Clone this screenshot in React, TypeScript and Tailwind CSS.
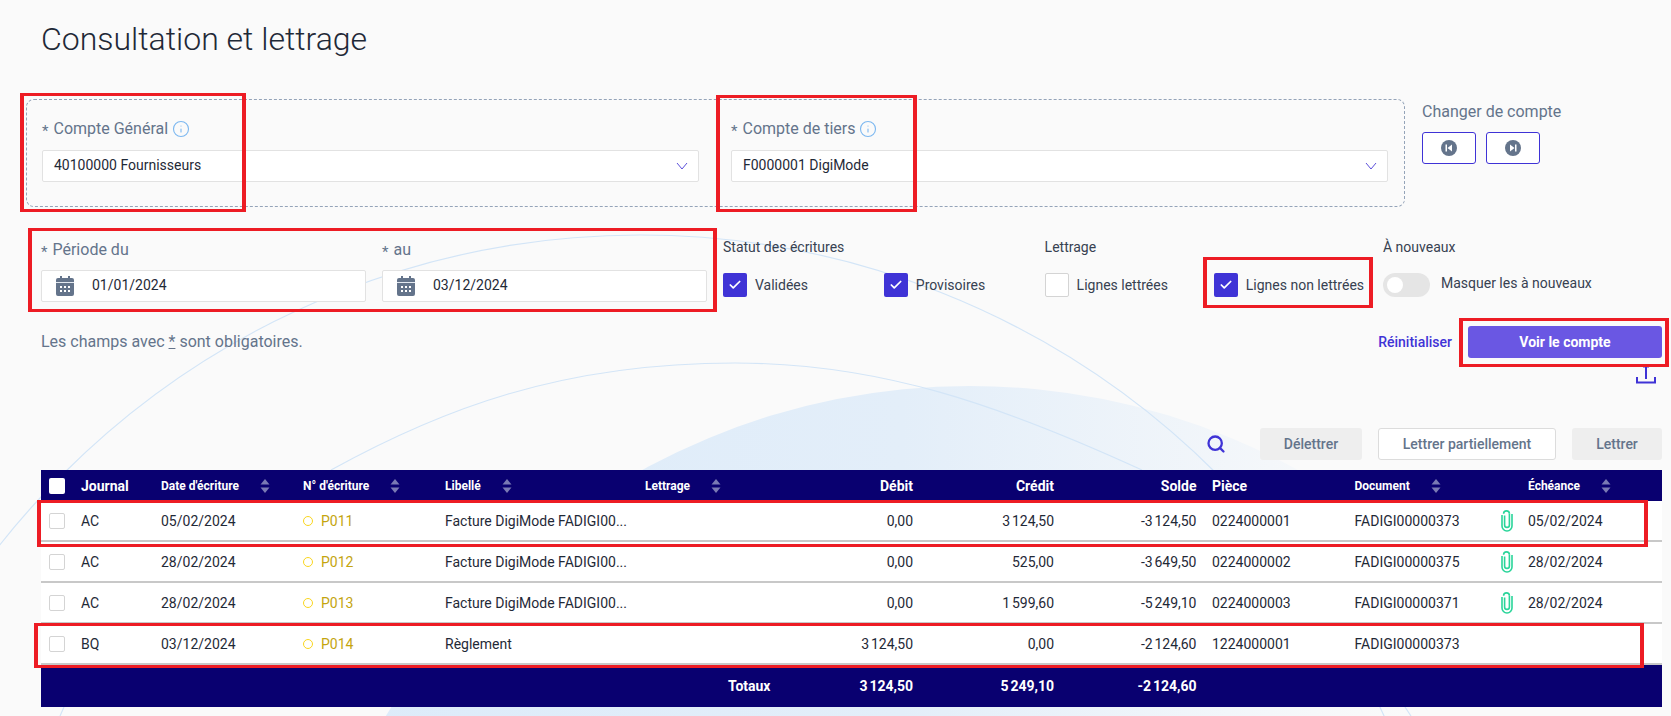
import { Check, Info, Search } from "lucide-react";

const cols =
  "grid grid-cols-[40px_80px_142px_142px_200px_140px_128px_141px_142.5px_158px_145.5px_28px_134px] items-center";

const rows = [
  { j: "AC", date: "05/02/2024", num: "P011", lib: "Facture DigiMode FADIGI00...", deb: "0,00", cred: "3\u202f124,50", solde: "-3\u202f124,50", piece: "0224000001", doc: "FADIGI00000373", ech: "05/02/2024" },
  { j: "AC", date: "28/02/2024", num: "P012", lib: "Facture DigiMode FADIGI00...", deb: "0,00", cred: "525,00", solde: "-3\u202f649,50", piece: "0224000002", doc: "FADIGI00000375", ech: "28/02/2024" },
  { j: "AC", date: "28/02/2024", num: "P013", lib: "Facture DigiMode FADIGI00...", deb: "0,00", cred: "1\u202f599,60", solde: "-5\u202f249,10", piece: "0224000003", doc: "FADIGI00000371", ech: "28/02/2024" },
  { j: "BQ", date: "03/12/2024", num: "P014", lib: "Règlement", deb: "3\u202f124,50", cred: "0,00", solde: "-2\u202f124,60", piece: "1224000001", doc: "FADIGI00000373", ech: "" },
];

function Chevron() {
  return (
    <svg width="12" height="8" viewBox="0 0 12 8" fill="none" className="shrink-0">
      <path d="M1 1l5 6 5-6" stroke="#5b4fdb" strokeWidth="1" />
    </svg>
  );
}

function CalendarIcon() {
  return (
    <svg width="18" height="20" viewBox="0 0 18 20" className="shrink-0">
      <path d="M4 0h2v2h6V0h2v2h2a2 2 0 0 1 2 2v14a2 2 0 0 1-2 2H2a2 2 0 0 1-2-2V4a2 2 0 0 1 2-2h2z" fill="#64748b" />
      <rect x="0" y="6" width="18" height="1" fill="#e2e8f0" />
      <path d="M4 10h2v2H4zM8 10h2v2H8zM12 10h2v2h-2zM4 14h2v2H4zM8 14h2v2H8zM12 14h2v2h-2z" fill="#fff" />
    </svg>
  );
}

function SortIcon() {
  return (
    <svg width="10" height="14" viewBox="0 0 10 14" className="ml-[21px] shrink-0">
      <path d="M5 0l4.500 5.500h-9z" fill="#7a7ab4" />
      <path d="M5 14L.5 8.500h9z" fill="#7a7ab4" />
    </svg>
  );
}

function Clip() {
  return (
    <svg width="12" height="22" viewBox="0 0 12 22" fill="none" className="ml-px">
      <path d="M3.600 5.500V15a2.400 2.400 0 0 0 4.800 0V3.800" stroke="#2ad59a" strokeWidth="1.600" />
      <path d="M8.400 3.800a2.900 2.900 0 0 0-5.800 0M1 5v11a5 5 0 0 0 10 0V4" stroke="#2ad59a" strokeWidth="1.600" />
    </svg>
  );
}

function Tick({ on, label }: { on: boolean; label: string }) {
  return (
    <div className="flex items-center gap-2">
      {on ? (
        <span className="flex h-6 w-6 items-center justify-center rounded-[2px] bg-[#3f33d6]">
          <Check className="h-[14px] w-[14px] text-white" strokeWidth={3} />
        </span>
      ) : (
        <span className="h-6 w-6 rounded-[2px] border border-[#d4d4d4] bg-white" />
      )}
      <span className="text-sm text-[#374151]">{label}</span>
    </div>
  );
}

function Star() {
  return <span className="mr-[5px] inline-block translate-y-[2px] text-[15px] text-[#64748b]">*</span>;
}

function SelectBox({ value }: { value: string }) {
  return (
    <div className="flex h-8 w-[657px] items-center justify-between rounded-[2px] border border-[#e2e2e2] bg-white pl-[11px] pr-[10px] text-sm text-[#1f2937]">
      <span className="-mt-0.5">{value}</span>
      <Chevron />
    </div>
  );
}

function DateField({ label, value }: { label: string; value: string }) {
  return (
    <div className="w-[325px]">
      <div className="h-[26px] text-base leading-[26px] text-[#64748b]">
        <Star />
        {label}
      </div>
      <div className="mt-[7px] flex h-8 items-center rounded-[2px] border border-[#e2e2e2] bg-white pl-[14px] text-sm text-[#1f2937]">
        <CalendarIcon />
        <span className="-mt-0.5 ml-[18px]">{value}</span>
      </div>
    </div>
  );
}

function SkipButton({ next }: { next?: boolean }) {
  return (
    <div className="flex h-8 w-[54px] items-center justify-center rounded-[3px] border border-[#3f33d6] bg-white">
      <svg width="16" height="16" viewBox="0 0 16 16">
        <circle cx="8" cy="8" r="8" fill="#64748b" />
        {next ? (
          <path d="M5 4.500l4.500 3.500L5 11.500zM10 4.500h1.500v7H10z" fill="#fff" />
        ) : (
          <path d="M11 4.500L6.500 8l4.500 3.500zM4.500 4.500H6v7H4.500z" fill="#fff" />
        )}
      </svg>
    </div>
  );
}

function Backdrop() {
  return (
    <svg className="absolute inset-0 h-full w-full" viewBox="0 0 1671 716" fill="none">
      <defs>
        <linearGradient id="blob" x1="0" y1="0" x2="1" y2="0">
          <stop offset="0" stopColor="#dcebfa" />
          <stop offset="0.45" stopColor="#e3eef9" />
          <stop offset="0.72" stopColor="#f4f7fa" />
          <stop offset="0.82" stopColor="#fafafa" />
        </linearGradient>
      </defs>
      <circle cx="970" cy="1068" r="682" fill="url(#blob)" />
      <circle cx="640" cy="1051" r="816" stroke="#d3e5f7" strokeWidth="1.200" />
      <path d="M331 470C440 410 560 363 735 363C880 363 1000 405 1142 470" stroke="#d3e5f7" strokeWidth="1.200" />
      <path d="M64 707l-4 9M1405 707l6 9" stroke="#d3e5f7" strokeWidth="1.200" />
    </svg>
  );
}

export default function App() {
  return (
    <div className="relative h-[716px] overflow-hidden bg-[#fafafa] font-[Roboto,sans-serif]">
      <Backdrop />

      <div className="relative pl-[41px] pr-[9px]">
        <h1 className="pt-5 text-[32px] font-light leading-[38px] text-[#1f2937]">Consultation et lettrage</h1>

        {/* Comptes */}
        <div className="-ml-[15px] mt-[41px] flex h-[108px]">
          <div className="flex w-[1379px] gap-8 rounded-[8px] border border-dashed border-[#94a3b8] pl-[15px] pt-[17px]">
            {[
              ["Compte Général", "40100000 Fournisseurs"],
              ["Compte de tiers", "F0000001 DigiMode"],
            ].map(([label, value]) => (
              <div key={label}>
                <div className="flex h-6 items-center text-base text-[#64748b]">
                  <Star />
                  {label}
                  <Info className="ml-1 h-[18px] w-[18px] text-[#7db8f0]" strokeWidth={1.5} />
                </div>
                <div className="mt-[9px]">
                  <SelectBox value={value} />
                </div>
              </div>
            ))}
          </div>
          <div className="ml-[17px] pt-px">
            <div className="h-6 text-base leading-6 text-[#64748b]">Changer de compte</div>
            <div className="mt-2 flex gap-[10px]">
              <SkipButton />
              <SkipButton next />
            </div>
          </div>
        </div>

        {/* Filtres */}
        <div className="mt-[30px] flex items-start">
          <div className="flex gap-4">
            <DateField label="Période du" value="01/01/2024" />
            <DateField label="au" value="03/12/2024" />
          </div>
          <div className="ml-4 w-[321.6px]">
            <div className="h-5 text-sm leading-5 text-[#374151]">Statut des écritures</div>
            <div className="mt-4 grid grid-cols-2">
              <Tick on label="Validées" />
              <Tick on label="Provisoires" />
            </div>
          </div>
          <div className="w-[338.4px]">
            <div className="h-5 text-sm leading-5 text-[#374151]">Lettrage</div>
            <div className="mt-4 grid grid-cols-2">
              <Tick on={false} label="Lignes lettrées" />
              <Tick on label="Lignes non lettrées" />
            </div>
          </div>
          <div>
            <div className="h-5 text-sm leading-5 text-[#374151]">À nouveaux</div>
            <div className="mt-4 flex items-center gap-[11px]">
              <span className="flex h-6 w-[47px] items-center rounded-full bg-[#e5e5e5] pl-1">
                <span className="h-4 w-4 rounded-full bg-white" />
              </span>
              <span className="-mt-1 text-sm text-[#374151]">Masquer les à nouveaux</span>
            </div>
          </div>
        </div>

        <div className="mt-6 flex h-8 items-center justify-between">
          <p className="text-base text-[#64748b]">
            Les champs avec <span className="underline">*</span> sont obligatoires.
          </p>
          <div className="flex items-center gap-4">
            <span className="text-sm font-medium text-[#3f33d6]">Réinitialiser</span>
            <button className="h-8 w-[194px] rounded-[3px] bg-[#6a57e3] text-sm font-bold text-white">Voir le compte</button>
          </div>
        </div>

        <div className="mt-[7px] flex h-5 justify-end pr-[6px]">
          <svg width="20" height="19" viewBox="0 0 20 19" fill="none">
            <path d="M10 14V2M7 1.500h6M1 12v5.500h18V12" stroke="#3f33d6" strokeWidth="2" />
          </svg>
        </div>

        {/* Actions */}
        <div className="mt-[43px] flex h-8 items-center justify-end gap-4 text-sm font-medium text-[#64748b]">
          <Search className="mr-[18px] h-5 w-5 text-[#3f33d6]" strokeWidth={2.75} />
          <button className="h-8 w-[102px] rounded-[3px] bg-[#eeeeee]">Délettrer</button>
          <button className="h-8 w-[178px] rounded-[3px] border border-[#dcdcdc] bg-white">Lettrer partiellement</button>
          <button className="h-8 w-[90px] rounded-[3px] bg-[#eeeeee]">Lettrer</button>
        </div>

        {/* Table */}
        <div className="mt-[10px]">
          <div className={`${cols} h-[31px] bg-[#090070] text-white`}>
            <span className="ml-2 h-4 w-4 rounded-[2px] bg-white" />
            <span className="text-sm font-bold">Journal</span>
            <span className="flex items-center text-xs font-bold">Date d'écriture<SortIcon /></span>
            <span className="flex items-center text-xs font-bold">N° d'écriture<SortIcon /></span>
            <span className="flex items-center text-xs font-bold">Libellé<SortIcon /></span>
            <span className="flex items-center text-xs font-bold">Lettrage<SortIcon /></span>
            <span className="text-right text-sm font-bold">Débit</span>
            <span className="text-right text-sm font-bold">Crédit</span>
            <span className="text-right text-sm font-bold">Solde</span>
            <span className="pl-[15.5px] text-sm font-bold">Pièce</span>
            <span className="flex items-center text-xs font-bold">Document<SortIcon /></span>
            <span />
            <span className="flex items-center text-xs font-bold">Échéance<SortIcon /></span>
          </div>
          {rows.map((r) => (
            <div key={r.num} className={`${cols} h-[41px] border-b-2 border-[#c8c8c8] bg-white text-sm text-[#1f2937] last:border-b-0`}>
              <span className="ml-2 h-4 w-4 rounded-[2px] border border-[#d4d4d4] bg-white" />
              <span>{r.j}</span>
              <span>{r.date}</span>
              <span className="flex items-center text-[#c4a50f]">
                <span className="mr-2 h-[10px] w-[10px] rounded-full border-[1.5px] border-[#fad61e]" />
                {r.num}
              </span>
              <span className="whitespace-nowrap">{r.lib}</span>
              <span />
              <span className="text-right">{r.deb}</span>
              <span className="text-right">{r.cred}</span>
              <span className="text-right">{r.solde}</span>
              <span className="pl-[15.5px]">{r.piece}</span>
              <span>{r.doc}</span>
              <span>{r.ech && <Clip />}</span>
              <span>{r.ech}</span>
            </div>
          ))}
          <div className={`${cols} h-[42px] bg-[#090070] text-sm font-bold text-white`}>
            <span />
            <span />
            <span />
            <span />
            <span />
            <span className="pr-[14.5px] text-right">Totaux</span>
            <span className="text-right">3{"\u202f"}124,50</span>
            <span className="text-right">5{"\u202f"}249,10</span>
            <span className="text-right">-2{"\u202f"}124,60</span>
          </div>
        </div>
      </div>

      {/* Annotations rouges */}
      <div className="pointer-events-none absolute left-[20px] top-[93px] h-[119px] w-[226px] border-x-4 border-y-[3px] border-[#ed1c24]" />
      <div className="pointer-events-none absolute left-[716px] top-[95px] h-[117px] w-[201px] border-x-4 border-y-[3px] border-[#ed1c24]" />
      <div className="pointer-events-none absolute left-[28px] top-[228px] h-[84px] w-[689px] border-x-4 border-y-[3px] border-[#ed1c24]" />
      <div className="pointer-events-none absolute left-[1203px] top-[257px] h-[51px] w-[170px] border-x-4 border-y-[3px] border-[#ed1c24]" />
      <div className="pointer-events-none absolute left-[1459px] top-[318px] h-[49px] w-[210px] border-x-4 border-y-[3px] border-[#ed1c24]" />
      <div className="pointer-events-none absolute left-[37px] top-[500px] h-[47px] w-[1611px] border-x-4 border-y-[3px] border-[#ed1c24]" />
      <div className="pointer-events-none absolute left-[34px] top-[623px] h-[45px] w-[1610px] border-x-4 border-y-[3px] border-[#ed1c24]" />
    </div>
  );
}
